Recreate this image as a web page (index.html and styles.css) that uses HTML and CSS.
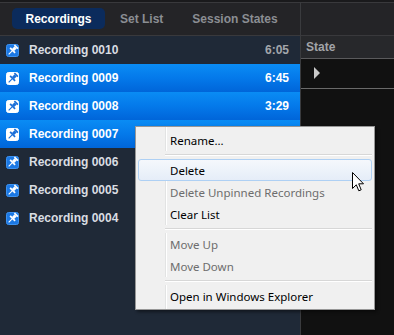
FILE: index.html
```html
<!DOCTYPE html>
<html>
<head>
<meta charset="utf-8">
<link rel="stylesheet" href="styles.css">
</head>
<body>
<div class="app">
  <div class="topline"></div>
  <div class="main">
    <div class="left">
      <div class="tabs">
        <div class="tab active">Recordings</div>
        <div class="tab t2">Set List</div>
        <div class="tab t3">Session States</div>
      </div>
      <div class="list">
        <div class="row"><svg class="pin" viewBox="0 0 13 13"><rect x="0.5" y="0.5" width="12" height="12" rx="2" fill="#1b78e4" stroke="#3d92f0"/><g transform="rotate(45 6.5 6.5) translate(0 -0.5)" fill="#fff"><rect x="4" y="1" width="5" height="1.6"/><rect x="5" y="2.5" width="3" height="3.8"/><rect x="3" y="6" width="7" height="1.7"/><rect x="6" y="7.5" width="1.1" height="5"/></g></svg><span class="name">Recording 0010</span><span class="time">6:05</span></div>
        <div class="row sel"><svg class="pin" viewBox="0 0 13 13"><rect x="0.5" y="0.5" width="12" height="12" rx="2" fill="#fff" stroke="#fff"/><g transform="rotate(45 6.5 6.5) translate(0 -0.5)" fill="#1b6fd8"><rect x="4" y="1" width="5" height="1.6"/><rect x="5" y="2.5" width="3" height="3.8"/><rect x="3" y="6" width="7" height="1.7"/><rect x="6" y="7.5" width="1.1" height="5"/></g></svg><span class="name">Recording 0009</span><span class="time">6:45</span></div>
        <div class="row sel"><svg class="pin" viewBox="0 0 13 13"><rect x="0.5" y="0.5" width="12" height="12" rx="2" fill="#fff" stroke="#fff"/><g transform="rotate(45 6.5 6.5) translate(0 -0.5)" fill="#1b6fd8"><rect x="4" y="1" width="5" height="1.6"/><rect x="5" y="2.5" width="3" height="3.8"/><rect x="3" y="6" width="7" height="1.7"/><rect x="6" y="7.5" width="1.1" height="5"/></g></svg><span class="name">Recording 0008</span><span class="time">3:29</span></div>
        <div class="row sel"><svg class="pin" viewBox="0 0 13 13"><rect x="0.5" y="0.5" width="12" height="12" rx="2" fill="#fff" stroke="#fff"/><g transform="rotate(45 6.5 6.5) translate(0 -0.5)" fill="#1b6fd8"><rect x="4" y="1" width="5" height="1.6"/><rect x="5" y="2.5" width="3" height="3.8"/><rect x="3" y="6" width="7" height="1.7"/><rect x="6" y="7.5" width="1.1" height="5"/></g></svg><span class="name">Recording 0007</span><span class="time"></span></div>
        <div class="row"><svg class="pin" viewBox="0 0 13 13"><rect x="0.5" y="0.5" width="12" height="12" rx="2" fill="#1b78e4" stroke="#3d92f0"/><g transform="rotate(45 6.5 6.5) translate(0 -0.5)" fill="#fff"><rect x="4" y="1" width="5" height="1.6"/><rect x="5" y="2.5" width="3" height="3.8"/><rect x="3" y="6" width="7" height="1.7"/><rect x="6" y="7.5" width="1.1" height="5"/></g></svg><span class="name">Recording 0006</span><span class="time"></span></div>
        <div class="row"><svg class="pin" viewBox="0 0 13 13"><rect x="0.5" y="0.5" width="12" height="12" rx="2" fill="#1b78e4" stroke="#3d92f0"/><g transform="rotate(45 6.5 6.5) translate(0 -0.5)" fill="#fff"><rect x="4" y="1" width="5" height="1.6"/><rect x="5" y="2.5" width="3" height="3.8"/><rect x="3" y="6" width="7" height="1.7"/><rect x="6" y="7.5" width="1.1" height="5"/></g></svg><span class="name">Recording 0005</span><span class="time"></span></div>
        <div class="row"><svg class="pin" viewBox="0 0 13 13"><rect x="0.5" y="0.5" width="12" height="12" rx="2" fill="#1b78e4" stroke="#3d92f0"/><g transform="rotate(45 6.5 6.5) translate(0 -0.5)" fill="#fff"><rect x="4" y="1" width="5" height="1.6"/><rect x="5" y="2.5" width="3" height="3.8"/><rect x="3" y="6" width="7" height="1.7"/><rect x="6" y="7.5" width="1.1" height="5"/></g></svg><span class="name">Recording 0004</span><span class="time"></span></div>
      </div>
    </div>
    <div class="right">
      <div class="rhead"></div>
      <div class="colhead">State</div>
      <div class="rrow"><svg class="play" viewBox="0 0 6 12"><path d="M0 0 L6 6 L0 12 Z" fill="#c9c9c9"/></svg></div>
    </div>
  </div>
  <div class="menu">
    <div class="item">Rename...</div>
    <div class="sep"></div>
    <div class="item hover">Delete</div>
    <div class="item dis">Delete Unpinned Recordings</div>
    <div class="item">Clear List</div>
    <div class="sep"></div>
    <div class="item dis">Move Up</div>
    <div class="item dis">Move Down</div>
    <div class="sep"></div>
    <div class="item">Open in Windows Explorer</div>
  </div>
  <svg class="cursor" viewBox="0 0 12 20" width="12" height="20"><path d="M0.5 0.5 L0.5 16.5 L4.3 12.8 L6.8 18.8 L9.2 17.8 L6.7 11.8 L11.5 11.8 Z" fill="#fff" stroke="#000" stroke-width="1" stroke-linejoin="miter"/></svg>
</div>
</body>
</html>
```

FILE: styles.css
```css
* { box-sizing: border-box; }
html, body { margin: 0; padding: 0; }
body {
  width: 394px;
  height: 335px;
  overflow: hidden;
  background: #1f2937;
  font-family: "Liberation Sans", Arial, sans-serif;
}
.app {
  position: relative;
  width: 394px;
  height: 335px;
  display: flex;
  flex-direction: column;
}
.topline {
  height: 2px;
  background: #1a1a1c;
  flex: none;
}
.main {
  flex: 1;
  display: flex;
}
.left {
  width: 301px;
  flex: none;
  border-right: 1px solid #3a3b3e;
  background: #1f2937;
  display: flex;
  flex-direction: column;
}
.tabs {
  height: 34px;
  border-top: 1px solid #39393c;
  border-bottom: 1px solid #39393c;
  background: #242427;
  display: flex;
  align-items: center;
  padding-left: 12px;
  padding-bottom: 1px;
}
.tab {
  flex: none;
  white-space: nowrap;
  height: 21px;
  display: flex;
  align-items: center;
  font-weight: bold;
  font-size: 12px;
  color: #8b8e93;
}
.tab.active {
  background: #0b2b5c;
  border-radius: 5px;
  color: #ffffff;
  width: 93px;
  justify-content: center;
}
.tab.t2 { margin-left: 15px; }
.tab.t3 { margin-left: 29px; }
.list { display: flex; flex-direction: column; }
.row {
  height: 28px;
  display: flex;
  align-items: center;
  padding-left: 6px;
  padding-right: 11px;
  color: #d9dde2;
  font-weight: bold;
  font-size: 12px;
  white-space: nowrap;
}
.row.sel {
  background: linear-gradient(#0a8cf4 0%, #0479ea 50%, #0065d9 100%);
  color: #ffffff;
}
.pin {
  width: 13px;
  height: 13px;
  flex: none;
  margin-right: 10px;
}
.name { flex: 1; }
.time { color: #a3a6ab; }
.row.sel .time { color: #ffffff; }
.right {
  flex: 1;
  background: #111111;
  display: flex;
  flex-direction: column;
}
.rhead {
  height: 34px;
  border-top: 1px solid #39393c;
  border-bottom: 1px solid #39393c;
  background: #242427;
}
.colhead {
  height: 23px;
  background: #27282b;
  border-bottom: 1px solid #5a5a5c;
  color: #a2a4a8;
  font-weight: bold;
  font-size: 12px;
  padding-left: 5px;
  display: flex;
  align-items: center;
}
.rrow {
  height: 30px;
  border-bottom: 1px solid #6a6a6a;
  display: flex;
  align-items: center;
  padding-left: 13px;
  padding-bottom: 2px;
}
.play { width: 6px; height: 12px; }
.menu {
  position: absolute;
  left: 135px;
  top: 126px;
  width: 240px;
  border: 1px solid #979797;
  padding: 2px;
  background: linear-gradient(to right, #f0f0f0 29px, #e2e3e3 29px, #e2e3e3 30px, #ffffff 30px, #ffffff 31px, #f0f0f0 31px);
  box-shadow: 2px 2px 3px rgba(0, 0, 0, 0.45);
  font-family: "Noto Sans", "Open Sans", sans-serif;
  font-size: 11.5px;
  color: #000;
}
.item {
  height: 22px;
  display: flex;
  align-items: center;
  padding-left: 32px;
  border-radius: 3px;
  white-space: nowrap;
}
.item.hover {
  border: 1px solid #aed0f4;
  background: linear-gradient(#f5f8fc, #e5edf8);
  padding-left: 31px;
}
.item.dis { color: #6d6d6d; }
.sep {
  height: 8px;
  margin-left: 27px;
  background: linear-gradient(#f0f0f0 3px, #d7d7d7 3px, #d7d7d7 4px, #ffffff 4px, #ffffff 5px, #f0f0f0 5px);
}
.cursor {
  position: absolute;
  left: 352px;
  top: 172px;
}
```
